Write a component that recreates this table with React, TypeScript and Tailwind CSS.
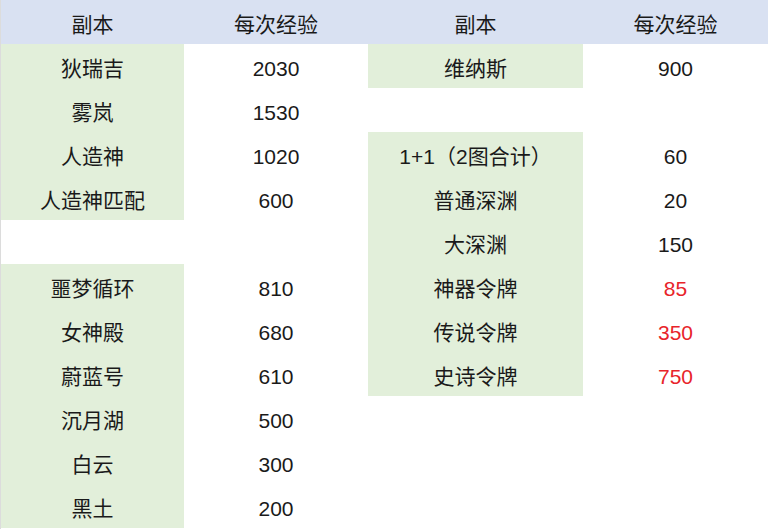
type Cell = { text: string; green?: boolean; red?: boolean };

const rows: Cell[][] = [
  [{ text: "狄瑞吉", green: true }, { text: "2030" }, { text: "维纳斯", green: true }, { text: "900" }],
  [{ text: "雾岚", green: true }, { text: "1530" }, { text: "" }, { text: "" }],
  [{ text: "人造神", green: true }, { text: "1020" }, { text: "1+1（2图合计）", green: true }, { text: "60" }],
  [{ text: "人造神匹配", green: true }, { text: "600" }, { text: "普通深渊", green: true }, { text: "20" }],
  [{ text: "" }, { text: "" }, { text: "大深渊", green: true }, { text: "150" }],
  [{ text: "噩梦循环", green: true }, { text: "810" }, { text: "神器令牌", green: true }, { text: "85", red: true }],
  [{ text: "女神殿", green: true }, { text: "680" }, { text: "传说令牌", green: true }, { text: "350", red: true }],
  [{ text: "蔚蓝号", green: true }, { text: "610" }, { text: "史诗令牌", green: true }, { text: "750", red: true }],
  [{ text: "沉月湖", green: true }, { text: "500" }, { text: "" }, { text: "" }],
  [{ text: "白云", green: true }, { text: "300" }, { text: "" }, { text: "" }],
  [{ text: "黑土", green: true }, { text: "200" }, { text: "" }, { text: "" }],
];

const headers = ["副本", "每次经验", "副本", "每次经验"];

export default function App() {
  return (
    <div
      className="w-[768px] h-[529px] overflow-hidden bg-white text-[21px] text-[#1a1a1a] border-l border-[#dcdcdc]"
      style={{ fontFamily: '"Liberation Sans", "Noto Sans CJK SC", sans-serif' }}
    >
      <div className="grid grid-cols-[183px_184px_215px_185px] auto-rows-[44px]">
        {headers.map((h, i) => (
          <div key={i} className="flex items-center justify-center pt-[5px] bg-[#d9e1f2]">
            {h}
          </div>
        ))}
        {rows.flatMap((row, r) =>
          row.map((cell, c) => (
            <div
              key={`${r}-${c}`}
              className={
                "flex items-center justify-center pt-[5px] " +
                (cell.green ? "bg-[#e2efda] " : "bg-white ") +
                (cell.red ? "text-[#e8242a]" : "")
              }
            >
              {cell.text}
            </div>
          ))
        )}
      </div>
    </div>
  );
}
